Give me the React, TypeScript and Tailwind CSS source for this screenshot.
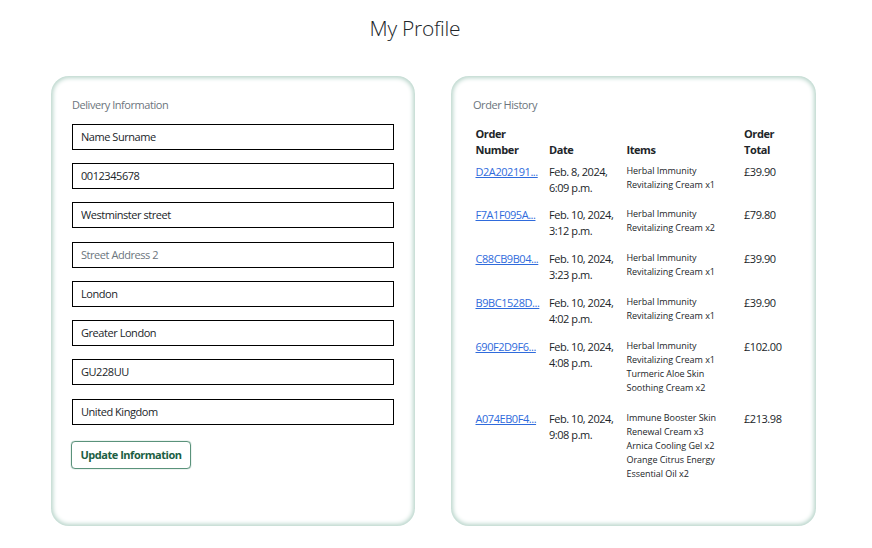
import React from 'react';

type Field = { value?: string; placeholder?: string };

const fields: Field[] = [
  { value: 'Name Surname' },
  { value: '0012345678' },
  { value: 'Westminster street' },
  { placeholder: 'Street Address 2' },
  { value: 'London' },
  { value: 'Greater London' },
  { value: 'GU228UU' },
  { value: 'United Kingdom' },
];

const orders = [
  { id: 'D2A202191...', date: ['Feb. 8, 2024,', '6:09 p.m.'], items: ['Herbal Immunity', 'Revitalizing Cream x1'], total: '£39.90' },
  { id: 'F7A1F095A...', date: ['Feb. 10, 2024,', '3:12 p.m.'], items: ['Herbal Immunity', 'Revitalizing Cream x2'], total: '£79.80' },
  { id: 'C88CB9B04...', date: ['Feb. 10, 2024,', '3:23 p.m.'], items: ['Herbal Immunity', 'Revitalizing Cream x1'], total: '£39.90' },
  { id: 'B9BC1528D...', date: ['Feb. 10, 2024,', '4:02 p.m.'], items: ['Herbal Immunity', 'Revitalizing Cream x1'], total: '£39.90' },
  { id: '690F2D9F6...', date: ['Feb. 10, 2024,', '4:08 p.m.'], items: ['Herbal Immunity', 'Revitalizing Cream x1', 'Turmeric Aloe Skin', 'Soothing Cream x2'], total: '£102.00' },
  { id: 'A074EB0F4...', date: ['Feb. 10, 2024,', '9:08 p.m.'], items: ['Immune Booster Skin', 'Renewal Cream x3', 'Arnica Cooling Gel x2', 'Orange Citrus Energy', 'Essential Oil x2'], total: '£213.98' },
];

const rowGrid = 'grid grid-cols-[73.5px_77.5px_117.5px_50px] whitespace-nowrap';
const card = 'h-[450px] rounded-[18px] shadow-[inset_0_0_4px_2px_#b9d5cb]';

function Lines({ lines }: { lines: string[] }) {
  return (
    <>
      {lines.map((line) => (
        <div key={line}>{line}</div>
      ))}
    </>
  );
}

export default function App() {
  return (
    <main className="h-[548px] w-[872px] overflow-hidden bg-white font-['Open_Sans','Noto_Sans',sans-serif] text-[11px] leading-4 tracking-[-0.45px] text-[#212529]">
      <h1 className="h-[76px] pt-[14px] pl-[369.5px] font-['Open_Sans',sans-serif] text-[21px] leading-7 font-light tracking-[-0.25px]">My Profile</h1>
      <div className="flex gap-9 pl-[51px]">
        <section className={`${card} w-[364px] pt-[21px] pl-[21px]`}>
          <h2 className="text-[#6c757d]">Delivery Information</h2>
          <form className="mt-[10.9px] w-[322px]" onSubmit={(e) => e.preventDefault()}>
            {fields.map((f) => (
              <input
                key={f.value ?? f.placeholder}
                defaultValue={f.value}
                placeholder={f.placeholder}
                className="mb-[13.25px] block h-[26px] w-full border border-black bg-white px-2 pb-[0.8px] outline-none placeholder:text-[#6c757d]"
              />
            ))}
            <button className="-ml-px mt-[3.1px] h-7 w-[120px] rounded border border-[#5a927b] text-[11px] font-bold tracking-[-0.47px] whitespace-nowrap text-[#1b5e43] shadow-[0_0_1px_#4b8b70]">
              Update Information
            </button>
          </form>
        </section>
        <section className={`${card} w-[365px] pt-[21px] pl-[22px]`}>
          <h2 className="text-[#6c757d]">Order History</h2>
          <div className="mt-[13px] ml-[2.5px]">
            <div className={`${rowGrid} mb-[5.7px] items-end font-bold`}>
              <div className="tracking-[-0.4px]"><Lines lines={['Order', 'Number']} /></div>
              <div>Date</div>
              <div>Items</div>
              <div className="tracking-[-0.4px]"><Lines lines={['Order', 'Total']} /></div>
            </div>
            {orders.map((o) => (
              <div key={o.id} className={`${rowGrid} pb-[15.65px] last:pt-[0.6px]`}>
                <div><a className="text-[#2f6bdc] underline">{o.id}</a></div>
                <div className="-mb-4"><Lines lines={o.date} /></div>
                <div className="text-[9px] leading-[14.05px] tracking-[-0.04px]"><Lines lines={o.items} /></div>
                <div>{o.total}</div>
              </div>
            ))}
          </div>
        </section>
      </div>
    </main>
  );
}
